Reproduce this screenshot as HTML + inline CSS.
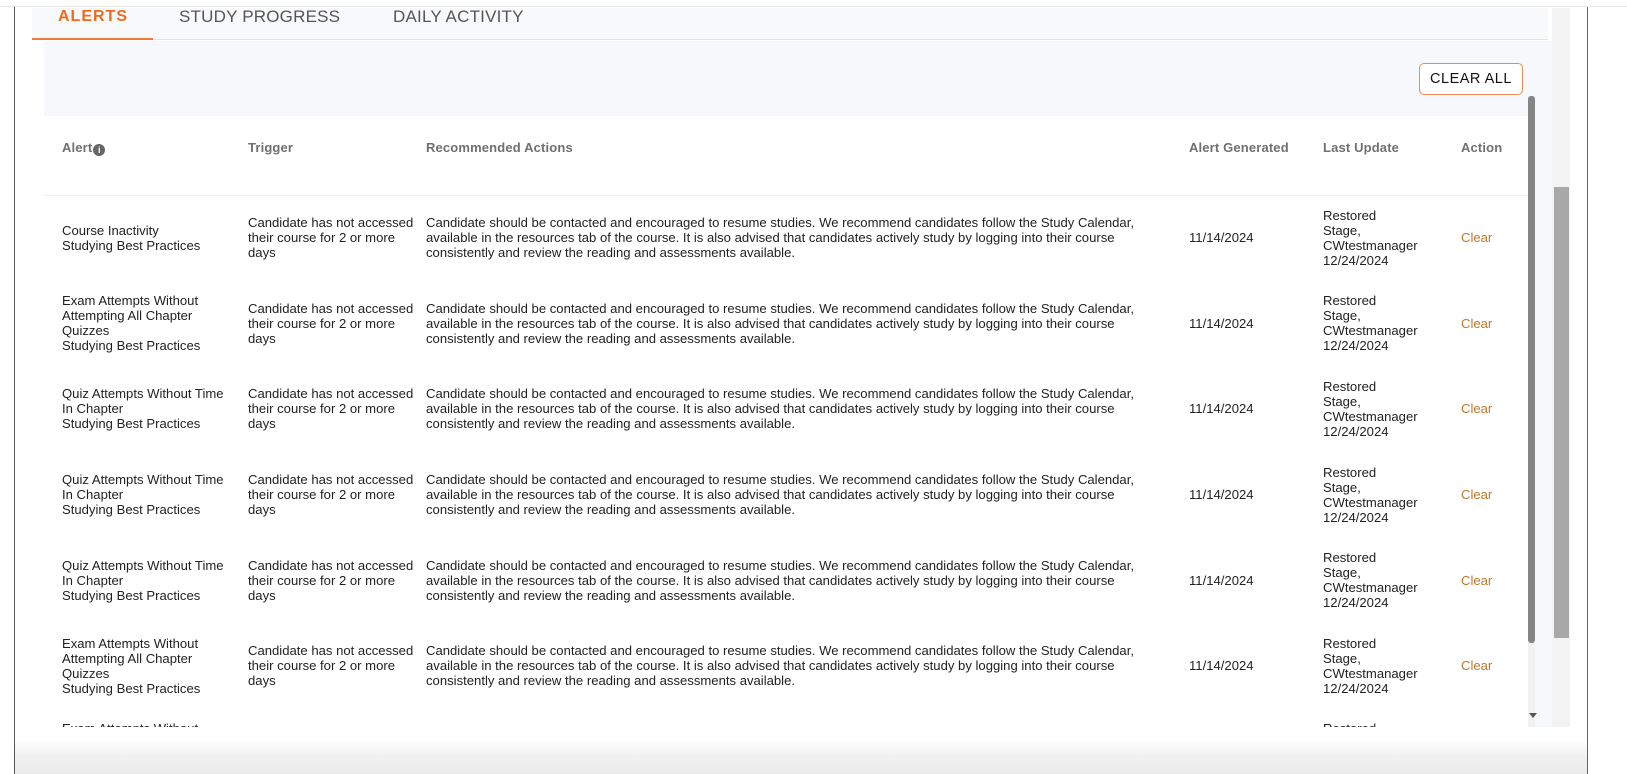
<!DOCTYPE html>
<html><head><meta charset="utf-8"><style>
*{margin:0;padding:0;box-sizing:border-box}
body{width:1627px;height:774px;overflow:hidden;background:#fff;position:relative;font-family:"Liberation Sans",Arial,sans-serif;color:#222}
.abs{position:absolute}
.tab{position:absolute;top:7px;font-size:17px;color:#555;letter-spacing:0.2px}
.hd{position:absolute;top:140px;font-size:13px;color:#707070;font-weight:bold;letter-spacing:0.15px}
.row{position:absolute;left:0;width:1484px;height:85.6px}
.c{position:absolute;top:0;height:85.6px;display:flex;align-items:center;font-size:13.1px;line-height:15px;white-space:nowrap;color:#222}
</style></head><body>
<div class="abs" style="left:0;top:0;width:1627px;height:7px;background:#fff;border-bottom:1px solid #e6e6e6"></div>
<div class="abs" style="left:14px;top:7px;width:1px;height:767px;background:#555"></div>
<div class="abs" style="left:1587px;top:7px;width:1px;height:767px;background:#666"></div>
<div class="abs" style="left:15px;top:8px;width:1572px;height:766px;background:#fff"></div>
<div class="abs" style="left:32px;top:8px;width:1516px;height:32px;background:#f8f9fb;border-bottom:1px solid #e4e4e8"></div>
<div class="tab" style="left:58px;color:#ee6a1c;font-weight:bold;font-size:16px;letter-spacing:1px;top:8px">ALERTS</div>
<div class="tab" style="left:179px">STUDY PROGRESS</div>
<div class="tab" style="left:393px">DAILY ACTIVITY</div>
<div class="abs" style="left:32px;top:38px;width:121px;height:2px;background:#ee7a3a"></div>
<div class="abs" style="left:44px;top:41px;width:1508px;height:686px;background:#f7f8fb"></div>
<div class="abs" style="left:44px;top:116px;width:1484px;height:611px;background:#fff"></div>
<div class="abs" style="left:1419px;top:63px;width:104px;height:32px;border:1px solid #ef8a55;border-radius:5px;background:#fff;font-size:14.5px;color:#111;text-align:center;line-height:30px;letter-spacing:0.5px">CLEAR ALL</div>
<div class="hd" style="left:62px">Alert<span style="display:inline-block;width:12px;height:12px;border-radius:50%;background:#666;color:#fff;font-size:9px;line-height:12px;text-align:center;vertical-align:-1px;margin-left:1px">i</span></div>
<div class="hd" style="left:248px">Trigger</div>
<div class="hd" style="left:426px">Recommended Actions</div>
<div class="hd" style="left:1189px">Alert Generated</div>
<div class="hd" style="left:1323px">Last Update</div>
<div class="hd" style="left:1461px">Action</div>
<div class="abs" style="left:44px;top:195px;width:1484px;height:1px;background:#ececec"></div>
<div class="abs" style="left:44px;top:196px;width:1484px;height:531px;overflow:hidden">
<div style="position:relative;top:-196px">
<div class="row" style="top:195px"><div class="c" style="left:18px">Course Inactivity<br>Studying Best Practices</div><div class="c" style="left:204px">Candidate has not accessed<br>their course for 2 or more<br>days</div><div class="c" style="left:382px">Candidate should be contacted and encouraged to resume studies. We recommend candidates follow the Study Calendar,<br>available in the resources tab of the course. It is also advised that candidates actively study by logging into their course<br>consistently and review the reading and assessments available.</div><div class="c" style="left:1145px">11/14/2024</div><div class="c" style="left:1279px">Restored<br>Stage,<br>CWtestmanager<br>12/24/2024</div><div class="c" style="left:1417px;color:#c0782a">Clear</div></div>
<div class="row" style="top:280.6px"><div class="c" style="left:18px">Exam Attempts Without<br>Attempting All Chapter<br>Quizzes<br>Studying Best Practices</div><div class="c" style="left:204px">Candidate has not accessed<br>their course for 2 or more<br>days</div><div class="c" style="left:382px">Candidate should be contacted and encouraged to resume studies. We recommend candidates follow the Study Calendar,<br>available in the resources tab of the course. It is also advised that candidates actively study by logging into their course<br>consistently and review the reading and assessments available.</div><div class="c" style="left:1145px">11/14/2024</div><div class="c" style="left:1279px">Restored<br>Stage,<br>CWtestmanager<br>12/24/2024</div><div class="c" style="left:1417px;color:#c0782a">Clear</div></div>
<div class="row" style="top:366.2px"><div class="c" style="left:18px">Quiz Attempts Without Time<br>In Chapter<br>Studying Best Practices</div><div class="c" style="left:204px">Candidate has not accessed<br>their course for 2 or more<br>days</div><div class="c" style="left:382px">Candidate should be contacted and encouraged to resume studies. We recommend candidates follow the Study Calendar,<br>available in the resources tab of the course. It is also advised that candidates actively study by logging into their course<br>consistently and review the reading and assessments available.</div><div class="c" style="left:1145px">11/14/2024</div><div class="c" style="left:1279px">Restored<br>Stage,<br>CWtestmanager<br>12/24/2024</div><div class="c" style="left:1417px;color:#c0782a">Clear</div></div>
<div class="row" style="top:451.8px"><div class="c" style="left:18px">Quiz Attempts Without Time<br>In Chapter<br>Studying Best Practices</div><div class="c" style="left:204px">Candidate has not accessed<br>their course for 2 or more<br>days</div><div class="c" style="left:382px">Candidate should be contacted and encouraged to resume studies. We recommend candidates follow the Study Calendar,<br>available in the resources tab of the course. It is also advised that candidates actively study by logging into their course<br>consistently and review the reading and assessments available.</div><div class="c" style="left:1145px">11/14/2024</div><div class="c" style="left:1279px">Restored<br>Stage,<br>CWtestmanager<br>12/24/2024</div><div class="c" style="left:1417px;color:#c0782a">Clear</div></div>
<div class="row" style="top:537.4px"><div class="c" style="left:18px">Quiz Attempts Without Time<br>In Chapter<br>Studying Best Practices</div><div class="c" style="left:204px">Candidate has not accessed<br>their course for 2 or more<br>days</div><div class="c" style="left:382px">Candidate should be contacted and encouraged to resume studies. We recommend candidates follow the Study Calendar,<br>available in the resources tab of the course. It is also advised that candidates actively study by logging into their course<br>consistently and review the reading and assessments available.</div><div class="c" style="left:1145px">11/14/2024</div><div class="c" style="left:1279px">Restored<br>Stage,<br>CWtestmanager<br>12/24/2024</div><div class="c" style="left:1417px;color:#c0782a">Clear</div></div>
<div class="row" style="top:623px"><div class="c" style="left:18px">Exam Attempts Without<br>Attempting All Chapter<br>Quizzes<br>Studying Best Practices</div><div class="c" style="left:204px">Candidate has not accessed<br>their course for 2 or more<br>days</div><div class="c" style="left:382px">Candidate should be contacted and encouraged to resume studies. We recommend candidates follow the Study Calendar,<br>available in the resources tab of the course. It is also advised that candidates actively study by logging into their course<br>consistently and review the reading and assessments available.</div><div class="c" style="left:1145px">11/14/2024</div><div class="c" style="left:1279px">Restored<br>Stage,<br>CWtestmanager<br>12/24/2024</div><div class="c" style="left:1417px;color:#c0782a">Clear</div></div>
<div class="row" style="top:708.6px"><div class="c" style="left:18px">Exam Attempts Without<br>Attempting All Chapter<br>Quizzes<br>Studying Best Practices</div><div class="c" style="left:1279px">Restored<br>Stage,<br>CWtestmanager<br>12/24/2024</div></div>
</div></div>
<div class="abs" style="left:1528px;top:96px;width:7px;height:631px;background:#f1f1f1"></div>
<div class="abs" style="left:1528px;top:96px;width:7px;height:547px;background:#858585;border-radius:3px"></div>
<div class="abs" style="left:1529px;top:713px;width:0;height:0;border-left:4px solid transparent;border-right:4px solid transparent;border-top:5px solid #555"></div>
<div class="abs" style="left:1552px;top:8px;width:18px;height:719px;background:#f3f3f3"></div>
<div class="abs" style="left:1554px;top:187px;width:15px;height:451px;background:#a8a8a8"></div>
<div class="abs" style="left:15px;top:728px;width:1572px;height:46px;background:linear-gradient(#fff,#fff 25%,#f1f1f1 60%,#ebebeb)"></div>
</body></html>
